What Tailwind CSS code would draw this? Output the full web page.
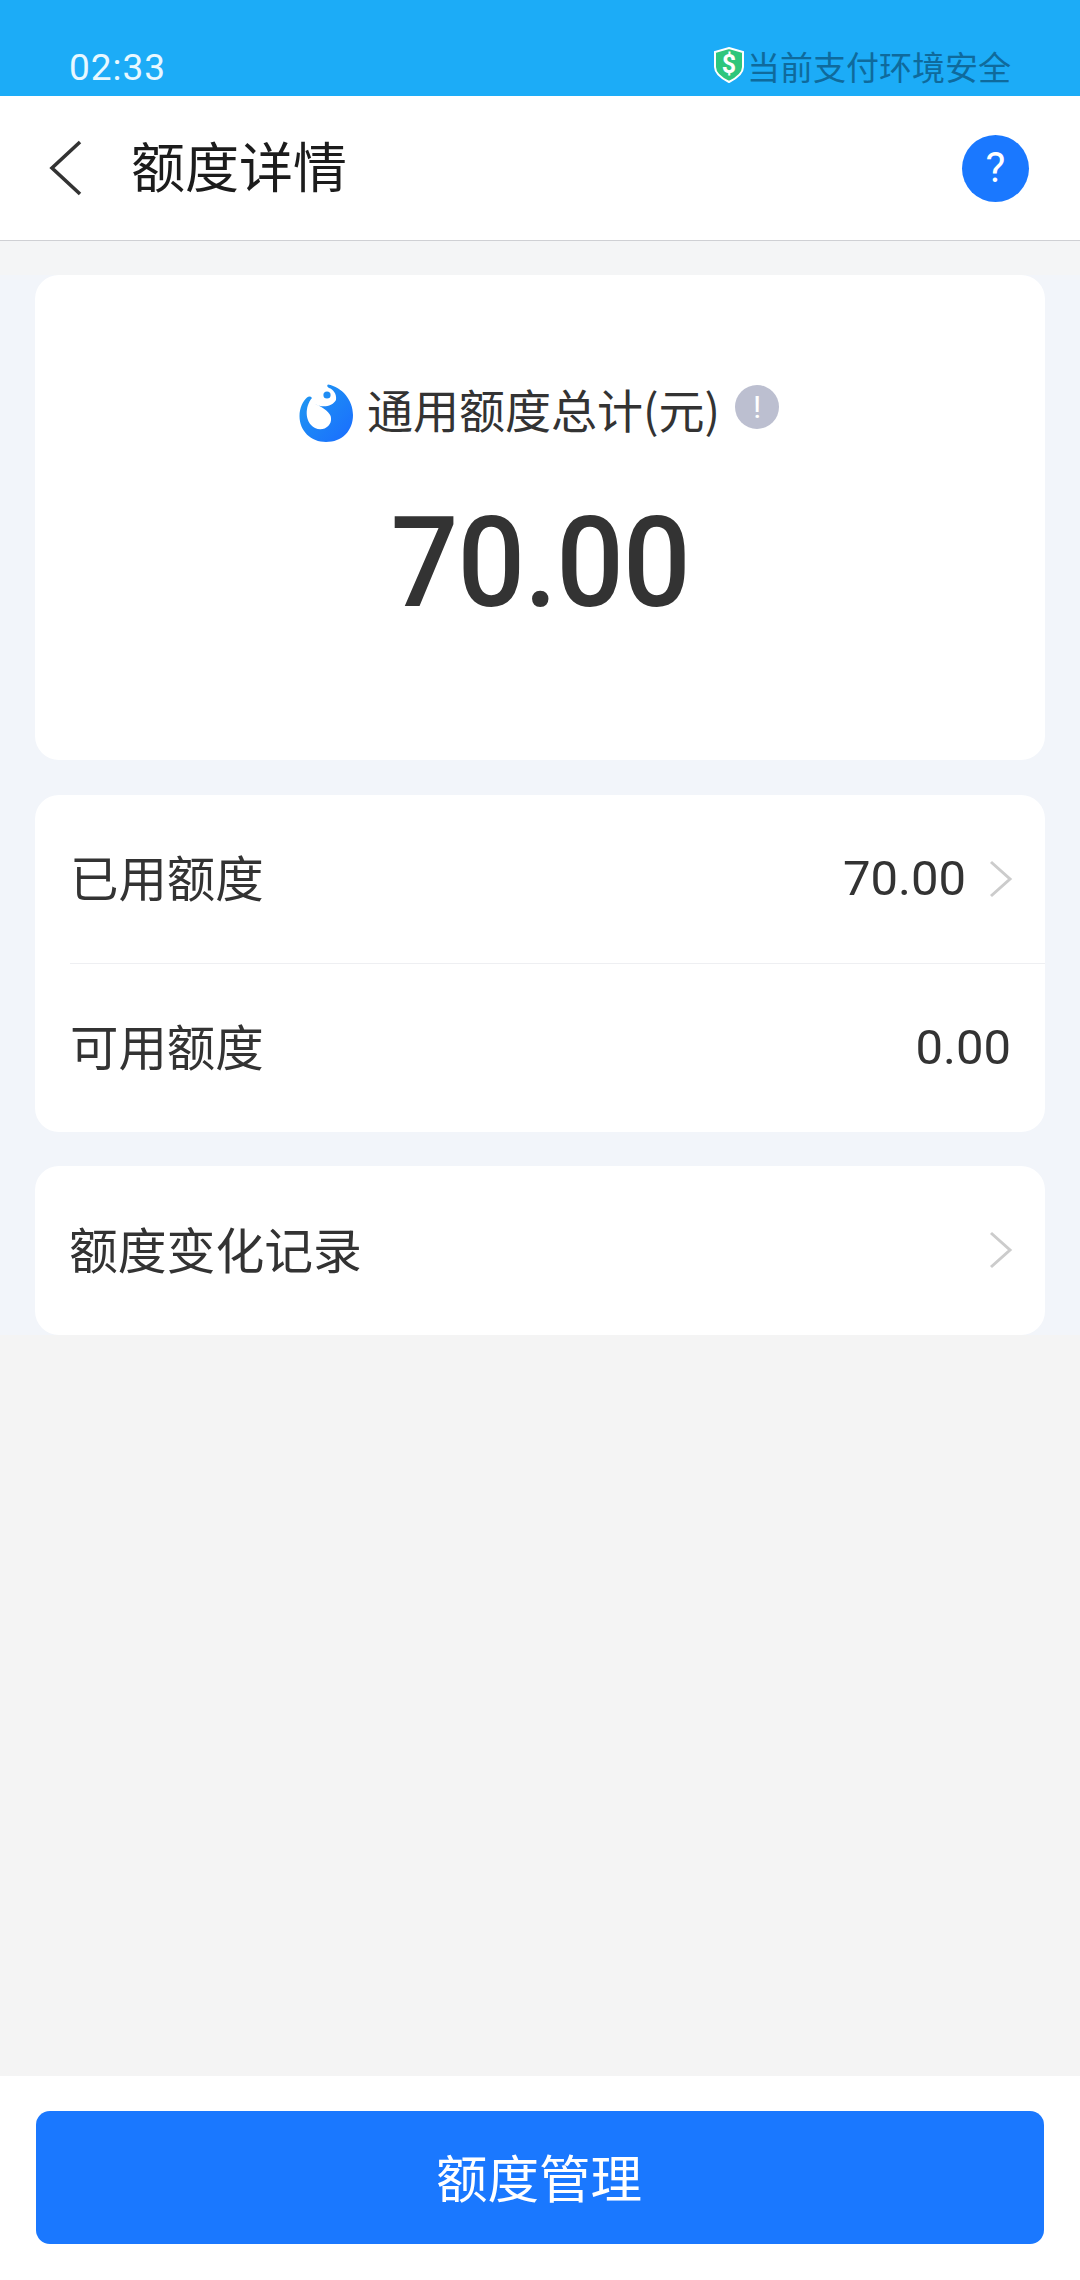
<!DOCTYPE html>
<html lang="zh">
<head>
<meta charset="utf-8">
<script src="https://cdn.jsdelivr.net/npm/@tailwindcss/browser@4"></script>
</head>
<body class="m-0">
<div class="w-[1080px] h-[2280px] flex flex-col bg-[#f4f4f4] font-['Noto_Sans_CJK_SC','Noto_Sans_CJK_SC',sans-serif] overflow-hidden">
  <!-- status strip -->
  <div class="h-[96px] shrink-0 bg-[#1cacf7] flex items-end justify-between pl-[69px] pr-[69px] pb-[6px]">
    <span class="font-['Roboto',sans-serif] text-[37px] leading-[44px] tracking-[1px] text-[#e8f8ff] font-normal">02:33</span>
    <div class="flex items-center h-[48px]">
      <svg width="32" height="36" viewBox="0 0 32 36" class="mr-[2px] mb-[2px]">
        <path d="M16 1 L30 5 V20 Q30 28 16 35 Q2 28 2 20 V5 Z" fill="#2fc67c" stroke="#ffffff" stroke-width="2"/>
        <text x="16" y="26" text-anchor="middle" font-family="Roboto, sans-serif" font-weight="700" font-size="25" fill="#ffffff">$</text>
      </svg>
      <span class="text-[33px] leading-[48px] text-[#0f6a9c]">当前支付环境安全</span>
    </div>
  </div>

  <!-- title bar -->
  <header class="h-[145px] shrink-0 bg-white border-b border-[#cfd0d4] flex items-center pl-[49px] pr-[51px]">
    <svg width="34" height="56" viewBox="0 0 34 56" class="mb-[1px]">
      <path d="M31 2 L3 28 L31 54" fill="none" stroke="#333333" stroke-width="3.6"/>
    </svg>
    <h1 class="ml-[48px] mb-[6px] text-[54px] leading-[60px] font-normal text-[#1c1c1c]">额度详情</h1>
    <div class="ml-auto w-[67px] h-[67px] rounded-full bg-[#1a78ff] flex items-center justify-center text-white text-[42px] leading-none font-['Roboto',sans-serif] font-normal">?</div>
  </header>

  <div class="h-[34px] shrink-0 bg-[#f4f5f6]"></div>

  <!-- cards -->
  <main class="shrink-0 bg-[#f2f5fa] h-[1060px] px-[35px] flex flex-col gap-[35px]">
    <section class="h-[485px] shrink-0 bg-white rounded-[24px] flex flex-col items-center">
      <div class="mt-[105px] flex items-center h-[60px]">
        <svg width="55" height="59" viewBox="9 10 55 59" class="mt-[7px] ml-[-2px]">
          <defs>
            <linearGradient id="drop" x1="0" y1="0" x2="1" y2="1">
              <stop offset="0" stop-color="#1f9bf0"/>
              <stop offset="1" stop-color="#1a6cff"/>
            </linearGradient>
          </defs>
          <!-- round mark with the white figure cut out of it -->
          <path d="M38 10.5 C52 13 63 26 63 41 C63 57 52 68 36 68 C21 68 9.5 57 9.5 42 C9.5 34 13 27 17 23.5 Q20 21.5 22 24 C15 32 14 48 25 54 C33 58 42 52 41 44 C41 39 33 33 25 30 C32 34 42 33 46 26 C47 20 43 15 39 14 Q36 12 38 10.5 Z" fill="url(#drop)"/>
          <circle cx="37" cy="21" r="3.6" fill="#1f8df4"/>
        </svg>
        <span class="ml-[13px] mb-[4px] text-[46px] leading-[60px] text-[#333333]">通用额度总计(元)</span>
        <span class="ml-[15px] mb-[6px] w-[44px] h-[44px] rounded-full bg-[#bcbfd0] flex items-center justify-center text-white text-[32px] leading-none font-['Roboto',sans-serif]">!</span>
      </div>
      <div class="mt-[48px] scale-x-[0.945] font-['Roboto',sans-serif] font-medium text-[126px] leading-[150px] text-[#333333] tracking-[-1px]">70.00</div>
    </section>

    <section class="h-[337px] shrink-0 bg-white rounded-[24px] flex flex-col">
      <div class="h-[169px] shrink-0 ml-[35px] pr-[35px] border-b border-[#eeeff2] flex items-center justify-between">
        <span class="mb-[7px] text-[48.4px] leading-[60px] text-[#333333]">已用额度</span>
        <div class="flex items-center">
          <span class="font-['Roboto',sans-serif] text-[49px] leading-[60px] text-[#333333]">70.00</span>
          <svg width="24" height="38" viewBox="0 0 24 38" class="ml-[23px] mr-[-3px]"><path d="M2 2 L21 19 L2 36" fill="none" stroke="#cccccc" stroke-width="3"/></svg>
        </div>
      </div>
      <div class="flex-1 px-[35px] flex items-center justify-between">
        <span class="mb-[7px] text-[48.4px] leading-[60px] text-[#333333]">可用额度</span>
        <span class="font-['Roboto',sans-serif] text-[49px] leading-[60px] text-[#333333] mr-[-1px]">0.00</span>
      </div>
    </section>

    <section class="h-[169px] mt-[-1px] shrink-0 bg-white rounded-[24px] pl-[34px] pr-[32px] flex items-center justify-between">
      <span class="mb-[6px] text-[48.8px] leading-[60px] text-[#333333]">额度变化记录</span>
      <svg width="24" height="38" viewBox="0 0 24 38" class="mb-[2px]"><path d="M2 2 L21 19 L2 36" fill="none" stroke="#cccccc" stroke-width="3"/></svg>
    </section>
  </main>

  <div class="flex-1"></div>

  <!-- bottom action -->
  <footer class="h-[204px] shrink-0 bg-white px-[36px] pt-[35px]">
    <button class="w-full h-[133px] rounded-[14px] bg-[#1a78ff] text-white text-[51.5px] leading-[60px] pb-[3px] pr-[2px]">额度管理</button>
  </footer>
</div>
</body>
</html>
